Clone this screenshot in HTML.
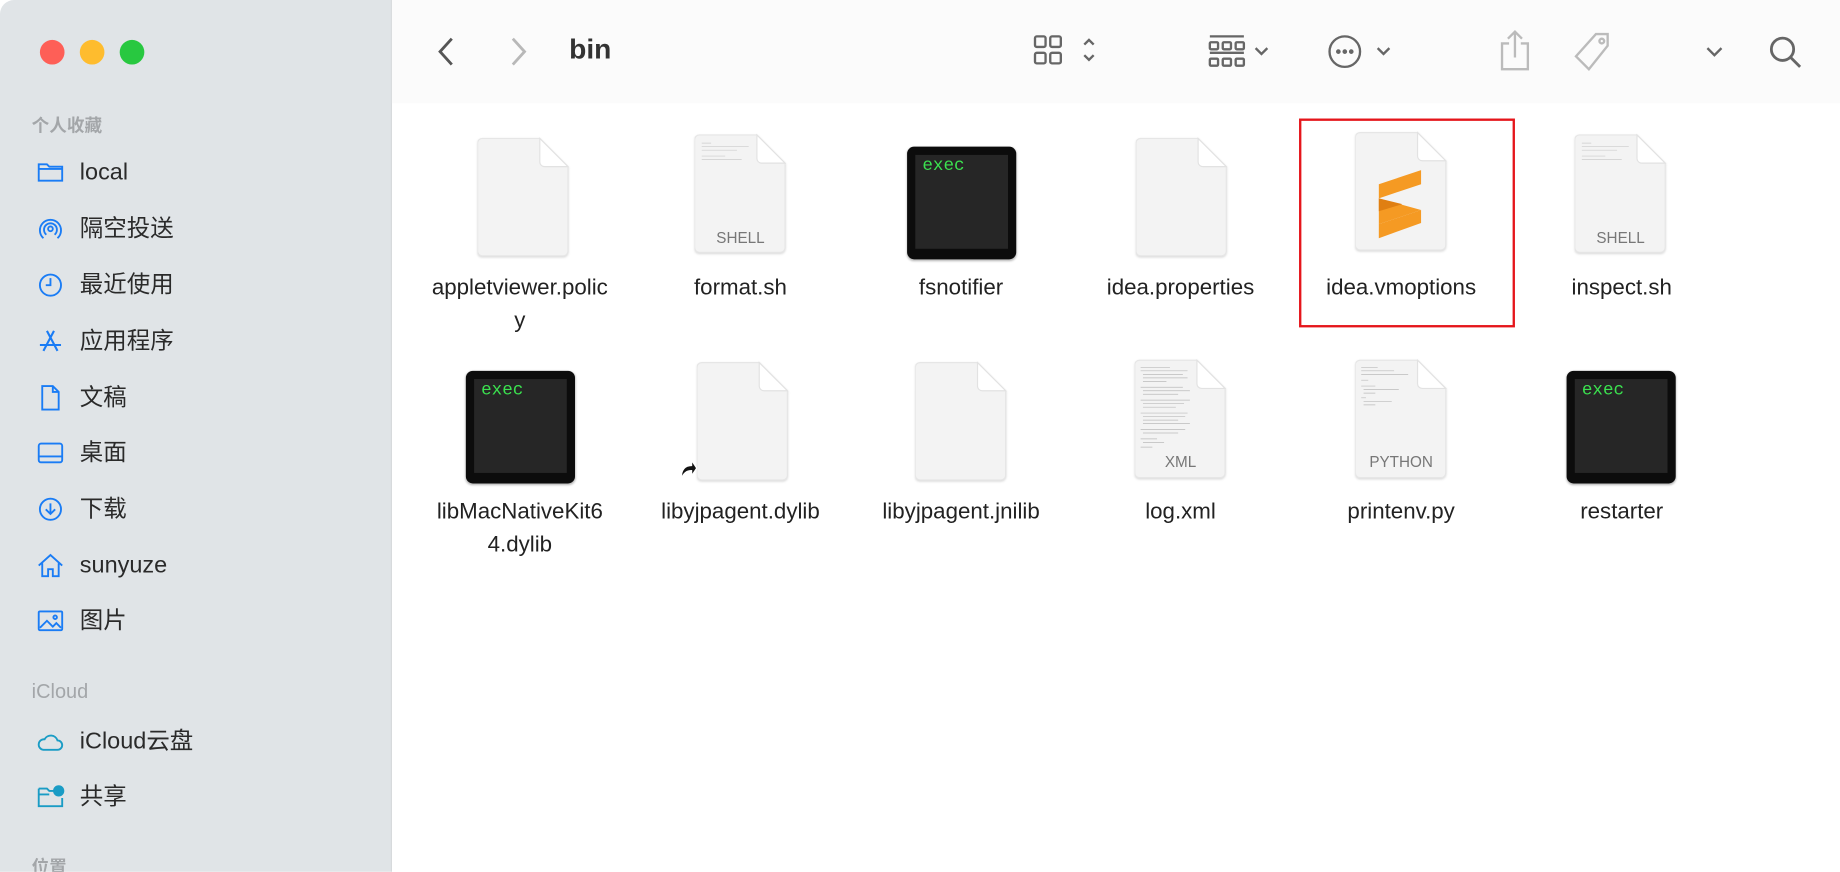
<!DOCTYPE html>
<html><head><meta charset="utf-8"><style>
html,body{margin:0;padding:0;width:1840px;height:872px;overflow:hidden;background:#fff}
#w{position:absolute;left:0;top:0;width:1568px;height:743px;transform:scale(1.17347);transform-origin:0 0;font-family:"Liberation Sans","Noto Sans CJK SC",sans-serif;background:#fff;overflow:hidden}
.side{position:absolute;left:0;top:0;width:333px;height:743px;background:#e0e4e7;border-right:1px solid #d2d5d8;border-top-left-radius:12px}
.tl{position:absolute;top:34px;width:21px;height:21px;border-radius:50%}
.hd{position:absolute;left:27px;font-size:15px;color:#a3a6a9;font-weight:bold}
.it{position:absolute;left:68px;font-size:20px;color:#2a2a2a;line-height:24px}
.ic{position:absolute;left:31px;width:24px;height:24px}
.tb{position:absolute;left:334px;top:0;right:0;height:88px;background:#fbfbfb}
.lbl{position:absolute;width:190px;text-align:center;font-size:19px;color:#222;line-height:28px}
.ex{position:absolute;width:93px;height:96px;border-radius:6px;background:#0c0c0c;box-shadow:0 1px 2px rgba(0,0,0,.3)}
.ex div{position:absolute;left:7px;top:7px;right:7px;bottom:9px;background:#262626;color:#3be24f;font-family:"Liberation Mono",monospace;font-size:15px;padding:1px 6px}
.doc{position:absolute;width:78px;height:102px;filter:drop-shadow(0 1px 1px rgba(0,0,0,.15))}
.tag{position:absolute;width:78px;text-align:center;font-size:13px;color:#777}
</style></head><body><div id="w">
<svg width="0" height="0" style="position:absolute"><defs>
<symbol id="d" viewBox="0 0 78 102"><path d="M4 1H53L77 25V97a4 4 0 0 1-4 4H4a4 4 0 0 1-4-4V5a4 4 0 0 1 4-4Z" fill="#f3f3f3" stroke="#e6e6e6"/><path d="M53 1V21a4 4 0 0 0 4 4H77Z" fill="#fff" stroke="#e2e2e2"/></symbol>
</defs></svg>
<div class="side">
<div class="tl" style="left:34px;background:#fe5f57"></div>
<div class="tl" style="left:68px;background:#febc2e"></div>
<div class="tl" style="left:102px;background:#28c840"></div>
<div class="hd" style="top:96px">个人收藏</div>
<svg class="ic" style="top:135px" viewBox="0 0 24 24" fill="none" stroke="#1a7cf5" stroke-width="1.6"><path d="M2 5h7l2 2h11v12H2Z M2 9h20"/></svg><div class="it" style="top:135px">local</div>
<svg class="ic" style="top:183px" viewBox="0 0 24 24" fill="none" stroke="#1a7cf5" stroke-width="1.6"><path d="M6 20A9 9 0 1 1 18 20M8.5 17A5.5 5.5 0 1 1 15.5 17"/><circle cx="12" cy="12" r="2"/></svg><div class="it" style="top:183px">隔空投送</div>
<svg class="ic" style="top:231px" viewBox="0 0 24 24" fill="none" stroke="#1a7cf5" stroke-width="1.6"><circle cx="12" cy="12" r="9"/><path d="M12 6v6H8"/></svg><div class="it" style="top:231px">最近使用</div>
<svg class="ic" style="top:279px" viewBox="0 0 24 24" fill="none" stroke="#1a7cf5" stroke-width="1.8"><path d="M9 3l9 17M15 3L6 20M3 15h18"/></svg><div class="it" style="top:279px">应用程序</div>
<svg class="ic" style="top:327px" viewBox="0 0 24 24" fill="none" stroke="#1a7cf5" stroke-width="1.6"><path d="M5 2h9l5 5v15H5Z M14 2v5h5"/></svg><div class="it" style="top:327px">文稿</div>
<svg class="ic" style="top:374px" viewBox="0 0 24 24" fill="none" stroke="#1a7cf5" stroke-width="1.6"><rect x="2" y="4" width="20" height="16" rx="2"/><path d="M2 15h20"/></svg><div class="it" style="top:374px">桌面</div>
<svg class="ic" style="top:422px" viewBox="0 0 24 24" fill="none" stroke="#1a7cf5" stroke-width="1.6"><circle cx="12" cy="12" r="9"/><path d="M12 7v9M8 12l4 4 4-4"/></svg><div class="it" style="top:422px">下载</div>
<svg class="ic" style="top:470px" viewBox="0 0 24 24" fill="none" stroke="#1a7cf5" stroke-width="1.6"><path d="M2 12L12 3l10 9M5 10v11h5v-6h4v6h5V10"/></svg><div class="it" style="top:470px">sunyuze</div>
<svg class="ic" style="top:517px" viewBox="0 0 24 24" fill="none" stroke="#1a7cf5" stroke-width="1.6"><rect x="2" y="4" width="20" height="16" rx="1"/><path d="M3 18l6-6 5 5 3-3 4 4" /><circle cx="16" cy="9" r="1.5"/></svg><div class="it" style="top:517px">图片</div>
<div class="hd" style="top:580px;font-weight:normal;font-size:17px">iCloud</div>
<svg class="ic" style="top:620px" viewBox="0 0 24 24" fill="none" stroke="#1a9cc5" stroke-width="1.6"><path d="M6 19h12a4 4 0 0 0 0-8 6 6 0 0 0-11-1 4.5 4.5 0 0 0-1 9Z"/></svg><div class="it" style="top:620px">iCloud云盘</div>
<svg class="ic" style="top:667px" viewBox="0 0 24 24" fill="none" stroke="#1a9cc5" stroke-width="1.6"><path d="M2 5h7l2 2h5M2 5v15h20v-7M2 10h9"/><circle cx="19" cy="7" r="4" fill="#1a9cc5"/></svg><div class="it" style="top:667px">共享</div>
<div class="hd" style="top:728px">位置</div>
</div>
<div class="tb">
<svg style="position:absolute;left:36px;top:30px" width="20" height="28" viewBox="0 0 20 28" fill="none" stroke="#555" stroke-width="2.4"><path d="M15 3L5 14l10 11"/></svg>
<svg style="position:absolute;left:98px;top:30px" width="20" height="28" viewBox="0 0 20 28" fill="none" stroke="#b8b8b8" stroke-width="2.4"><path d="M5 3l10 11L5 25"/></svg>
<div style="position:absolute;left:151px;top:29px;font-size:24px;font-weight:bold;color:#333">bin</div>
<svg style="position:absolute;left:545px;top:28px" width="70" height="32" viewBox="0 0 70 32" fill="none" stroke="#666" stroke-width="2"><rect x="3" y="3" width="9" height="9" rx="1.5"/><rect x="16" y="3" width="9" height="9" rx="1.5"/><rect x="3" y="17" width="9" height="9" rx="1.5"/><rect x="16" y="17" width="9" height="9" rx="1.5"/><path d="M45 10l4-4 4 4M45 19l4 4 4-4"/></svg>
<svg style="position:absolute;left:694px;top:28px" width="70" height="34" viewBox="0 0 70 34" fill="none" stroke="#666" stroke-width="2"><path d="M3 3h29M3 17h29"/><rect x="3" y="8" width="7" height="6" rx="1"/><rect x="14" y="8" width="7" height="6" rx="1"/><rect x="25" y="8" width="7" height="6" rx="1"/><rect x="3" y="22" width="7" height="6" rx="1"/><rect x="14" y="22" width="7" height="6" rx="1"/><rect x="25" y="22" width="7" height="6" rx="1"/><path d="M42 13l5 5 5-5"/></svg>
<svg style="position:absolute;left:796px;top:28px" width="70" height="34" viewBox="0 0 70 34" fill="none" stroke="#666" stroke-width="2"><circle cx="16" cy="16" r="13"/><circle cx="10.5" cy="16" r="1" fill="#666"/><circle cx="16" cy="16" r="1" fill="#666"/><circle cx="21.5" cy="16" r="1" fill="#666"/><path d="M44 13l5 5 5-5"/></svg>
<svg style="position:absolute;left:942px;top:24px" width="30" height="40" viewBox="0 0 30 40" fill="none" stroke="#bbb" stroke-width="2"><path d="M10 13H4v22h22V13h-6M15 25V3M9 9l6-6 6 6"/></svg>
<svg style="position:absolute;left:1006px;top:26px" width="36" height="36" viewBox="0 0 36 36" fill="none" stroke="#bbb" stroke-width="2"><path d="M20 3h10v10L14 33 3 22Z"/><circle cx="25" cy="9" r="2"/></svg>
<svg style="position:absolute;left:1118px;top:38px" width="18" height="14" viewBox="0 0 18 14" fill="none" stroke="#666" stroke-width="2"><path d="M3 3l6 6 6-6"/></svg>
<svg style="position:absolute;left:1172px;top:29px" width="32" height="32" viewBox="0 0 32 32" fill="none" stroke="#666" stroke-width="2.4"><circle cx="13" cy="13" r="9.5"/><path d="M20 20l8 8"/></svg>
</div>

<!-- row 1 -->
<svg class="doc" style="left:407px;top:117px"><use href="#d"/></svg>
<svg class="doc" style="left:592px;top:114px"><use href="#d"/><g stroke="#ccc" stroke-width=".6"><path d="M6 8h8M6 11h40M6 14h30M6 19h20M6 22h34"/></g></svg><div class="tag" style="left:592px;top:195px">SHELL</div>
<div class="ex" style="left:773px;top:125px"><div>exec</div></div>
<svg class="doc" style="left:968px;top:117px"><use href="#d"/></svg>
<svg class="doc" style="left:1155px;top:112px"><use href="#d"/><path d="M20 45l36-12v12L20 57Z M20 57l36 10-36 12Z" fill="#f59a23"/><path d="M20 57l20 5-20 6Z" fill="#e07f12"/><path d="M20 79l36-12v11L20 91Z" fill="#f59a23"/></svg>
<svg class="doc" style="left:1342px;top:114px"><use href="#d"/><g stroke="#ccc" stroke-width=".6"><path d="M6 8h8M6 11h40M6 14h30M6 19h20M6 22h34"/></g></svg><div class="tag" style="left:1342px;top:195px">SHELL</div>
<div class="lbl" style="left:348px;top:232px">appletviewer.polic<br>y</div>
<div class="lbl" style="left:536px;top:232px">format.sh</div>
<div class="lbl" style="left:724px;top:232px">fsnotifier</div>
<div class="lbl" style="left:911px;top:232px">idea.properties</div>
<div class="lbl" style="left:1099px;top:232px">idea.vmoptions</div>
<div class="lbl" style="left:1287px;top:232px">inspect.sh</div>
<div style="position:absolute;left:1107px;top:101px;width:180px;height:174px;border:2px solid #e5161b"></div>

<!-- row 2 -->
<div class="ex" style="left:397px;top:316px"><div>exec</div></div>
<svg class="doc" style="left:594px;top:308px"><use href="#d"/></svg>
<svg style="position:absolute;left:577px;top:390px" width="18" height="20" viewBox="0 0 16 18"><path d="M3 16C3 9 6 6 11 6V2l4 6-4 6v-4C7 10 5 12 3 16Z" fill="#111" stroke="#fff" stroke-width="1"/></svg>
<svg class="doc" style="left:780px;top:308px"><use href="#d"/></svg>
<svg class="doc" style="left:967px;top:306px"><use href="#d"/><g stroke="#bbb" stroke-width=".6"><path d="M5 7h25M5 10h40M7 13h34M7 16h38M7 19h20M5 24h36M7 27h40M7 30h30M5 35h42M7 38h35M7 41h28M5 46h40M7 49h36M7 52h30M7 55h40M5 60h38M7 63h30M5 68h14M7 71h18M5 75h10"/></g></svg><div class="tag" style="left:967px;top:386px">XML</div>
<svg class="doc" style="left:1155px;top:306px"><use href="#d"/><g stroke="#bbb" stroke-width=".6"><path d="M5 7h14M5 10h28M5 13h40M5 18h6M5 23h12M7 26h30M7 29h10M5 33h4M7 36h24M7 39h10"/></g></svg><div class="tag" style="left:1155px;top:386px">PYTHON</div>
<div class="ex" style="left:1335px;top:316px"><div>exec</div></div>
<div class="lbl" style="left:348px;top:423px">libMacNativeKit6<br>4.dylib</div>
<div class="lbl" style="left:536px;top:423px">libyjpagent.dylib</div>
<div class="lbl" style="left:724px;top:423px">libyjpagent.jnilib</div>
<div class="lbl" style="left:911px;top:423px">log.xml</div>
<div class="lbl" style="left:1099px;top:423px">printenv.py</div>
<div class="lbl" style="left:1287px;top:423px">restarter</div>
</div></body></html>
